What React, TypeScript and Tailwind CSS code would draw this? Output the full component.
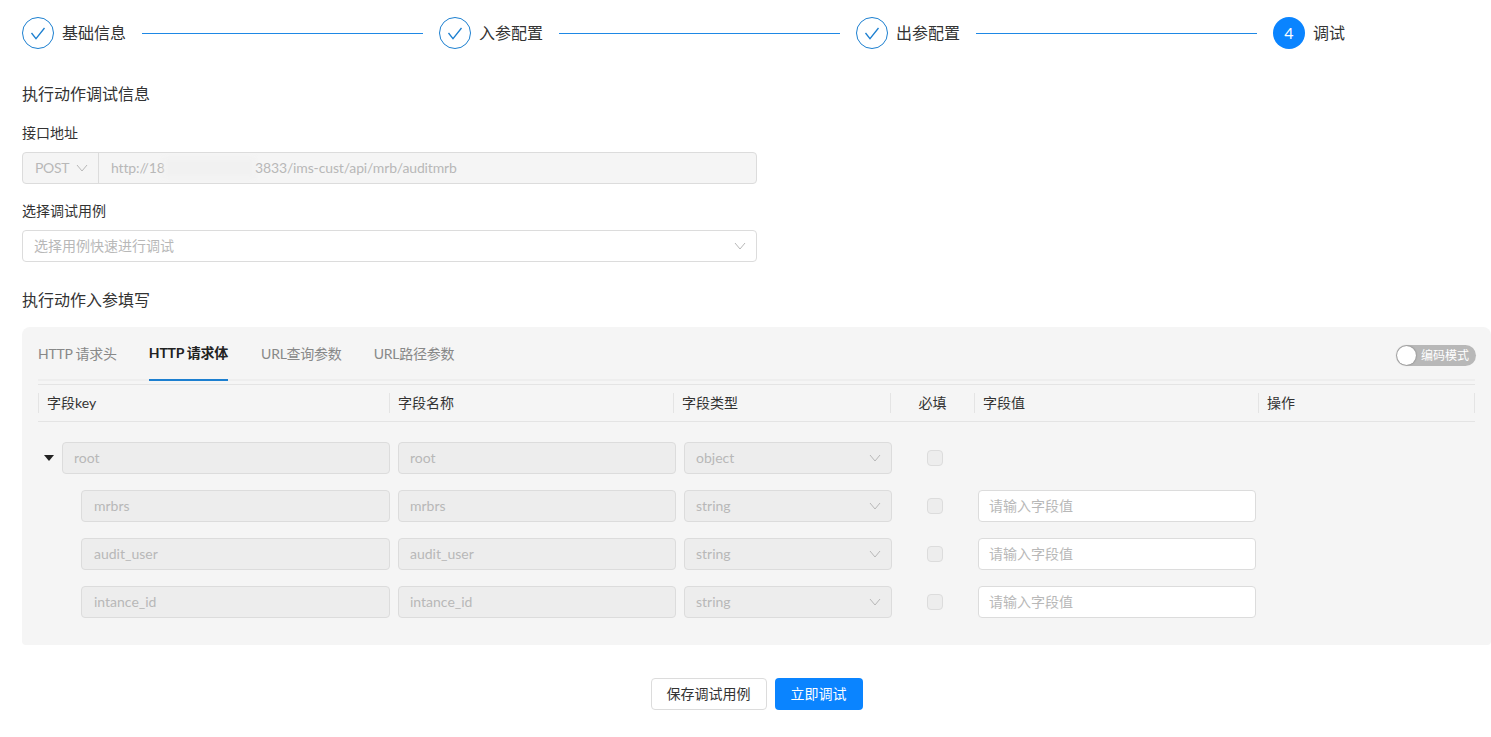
import React from "react";

const FONT = 'Lato, "Noto Sans CJK SC", sans-serif';

function Chevron({ className = "" }: { className?: string }) {
  return (
    <svg viewBox="0 0 12 8" className={className} fill="none" stroke="currentColor" strokeWidth="1">
      <polyline points="1,1 6,7 11,1" />
    </svg>
  );
}

function Step({ label, n, last }: { label: string; n?: number; last?: boolean }) {
  return (
    <div className={last ? "flex items-center" : "flex flex-1 items-center"}>
      {n ? (
        <div className="flex h-8 w-8 items-center justify-center rounded-full bg-[#0a84ff] text-base text-white">{n}</div>
      ) : (
        <div className="flex h-8 w-8 items-center justify-center rounded-full border border-[#1c7fd0] text-[#1c7fd0]">
          <svg viewBox="0 0 16 16" className="h-4 w-4" fill="none" stroke="currentColor" strokeWidth="1.3">
            <polyline points="1.5,8 6,13.6 14.5,3" />
          </svg>
        </div>
      )}
      <span className="ml-2 text-base leading-8 text-[#333]">{label}</span>
      {!last && <div className="mx-4 h-px flex-1 bg-[#1e88e5]" />}
    </div>
  );
}

const rows = [
  { key: "root", type: "object", root: true },
  { key: "mrbrs", type: "string" },
  { key: "audit_user", type: "string" },
  { key: "intance_id", type: "string" },
];

const headers: [string, string][] = [
  ["字段key", "w-[351px]"],
  ["字段名称", "w-[284px]"],
  ["字段类型", "w-[217px]"],
  ["必填", "w-[84px] text-center"],
  ["字段值", "w-[284px]"],
  ["操作", "w-[217px]"],
];

function Disabled({ children, className = "" }: { children: React.ReactNode; className?: string }) {
  return (
    <div className={"flex h-8 items-center rounded border border-[#dcdcdc] bg-[#ededed] pr-3 text-sm text-[#b8b8b8] " + className}>
      {children}
    </div>
  );
}

export default function App() {
  return (
    <div className="min-h-[737px] bg-white pl-[22px] pt-[17px] text-[#333]" style={{ fontFamily: FONT }}>
      <div className="flex">
        <Step label="基础信息" />
        <Step label="入参配置" />
        <Step label="出参配置" />
        <div className="w-[218px]">
          <Step label="调试" n={4} last />
        </div>
      </div>

      <h2 className="mt-[33px] text-base leading-6 text-[#333]">执行动作调试信息</h2>
      <div className="mt-[17px] text-sm leading-5 text-[#333]">接口地址</div>
      <div className="mt-[9px] flex h-8 w-[735px] rounded border border-[#dcdcdc] bg-[#f5f5f5] text-sm text-[#b8b8b8]">
        <div className="flex w-[76px] items-center gap-[7px] border-r border-[#dcdcdc] pl-3 tracking-[-0.3px]">
          POST <Chevron className="h-2 w-3" />
        </div>
        <div className="relative flex items-center pl-3 tracking-[-0.14px]">
          <span className="w-[54px]">http://18</span>
          <span className="w-[90px]" />
          <span className="absolute left-[65px] h-5 w-[90px] bg-[#f1f1f1] blur-[2px]" />
          3833/ims-cust/api/mrb/auditmrb
        </div>
      </div>
      <div className="mt-[17px] text-sm leading-5 text-[#333]">选择调试用例</div>
      <div className="mt-[9px] flex h-8 w-[735px] items-center justify-between rounded border border-[#dcdcdc] bg-white pl-[11px] pr-[10px] text-sm text-[#b8b8b8]">
        选择用例快速进行调试
        <Chevron className="h-2 w-3" />
      </div>
      <h2 className="mt-[26px] text-base leading-6 text-[#333]">执行动作入参填写</h2>

      <div className="mt-[15px] h-[318px] rounded-t-lg rounded-b bg-[#f5f5f5] px-4">
        <div className="relative flex h-[54px] border-b-2 border-[#eeeeee] text-sm tracking-[-0.25px]">
          <div className="flex h-[54px] items-center text-[#888]">HTTP 请求头</div>
          <div className="ml-8 flex h-[54px] items-center border-b-2 border-[#1c7fd0] font-bold text-[#222]">HTTP 请求体</div>
          <div className="ml-[33px] flex h-[54px] items-center text-[#888]">URL查询参数</div>
          <div className="ml-8 flex h-[54px] items-center text-[#888]">URL路径参数</div>
          <div className="absolute -right-px top-[18px] flex h-[21px] w-20 items-center rounded-full bg-[#b8b8b8] pl-px text-xs tracking-normal text-white">
            <span className="h-[19px] w-[19px] rounded-full bg-white shadow-[0_0_2px_rgba(0,0,0,0.45)]" />
            <span className="ml-[5px]">编码模式</span>
          </div>
        </div>

        <div className="mt-[3px] flex h-[38px] items-center border-y border-[#e4e4e4] text-sm text-[#333]">
          {headers.map(([h, w], i) => (
            <div key={h} className={"flex h-5 items-center border-l border-[#e4e4e4] pl-2 " + w + (i === 5 ? " border-r" : "")}>
              <span className={i === 3 ? "w-full pr-2" : ""}>{h}</span>
            </div>
          ))}
        </div>

        <div className="mt-5 flex flex-col gap-4">
          {rows.map((r) => (
            <div key={r.key} className="flex h-8 items-center">
              <div className={"flex w-[352px] items-center " + (r.root ? "" : "pl-[43px]")}>
                {r.root && (
                  <svg viewBox="0 0 10 6" className="ml-[6px] mr-[8px] h-[6px] w-[10px]" fill="#222">
                    <polygon points="0,0 10,0 5,6" />
                  </svg>
                )}
                <Disabled className={r.root ? "flex-1 pl-[11px]" : "flex-1 pl-3"}>{r.key}</Disabled>
              </div>
              <Disabled className="ml-2 w-[278px] pl-[11px]">{r.key}</Disabled>
              <Disabled className="ml-2 w-[208px] justify-between pl-[11px] pr-[10px]">
                {r.type}
                <Chevron className="h-2 w-3" />
              </Disabled>
              <div className="flex w-[86px] justify-center">
                <span className="h-4 w-4 rounded-sm border border-[#dcdcdc] bg-[#ededed]" />
              </div>
              {!r.root && (
                <div className="flex h-8 w-[278px] items-center rounded border border-[#dcdcdc] bg-white pl-[10px] pr-[11px] text-sm text-[#b8b8b8]">
                  请输入字段值
                </div>
              )}
            </div>
          ))}
        </div>
      </div>

      <div className="mt-[33px] flex justify-center gap-2">
        <button className="h-8 w-[116px] rounded border border-[#dcdcdc] bg-white text-sm text-[#333]">保存调试用例</button>
        <button className="h-8 w-[88px] rounded bg-[#0a84ff] text-sm text-white">立即调试</button>
      </div>
    </div>
  );
}
